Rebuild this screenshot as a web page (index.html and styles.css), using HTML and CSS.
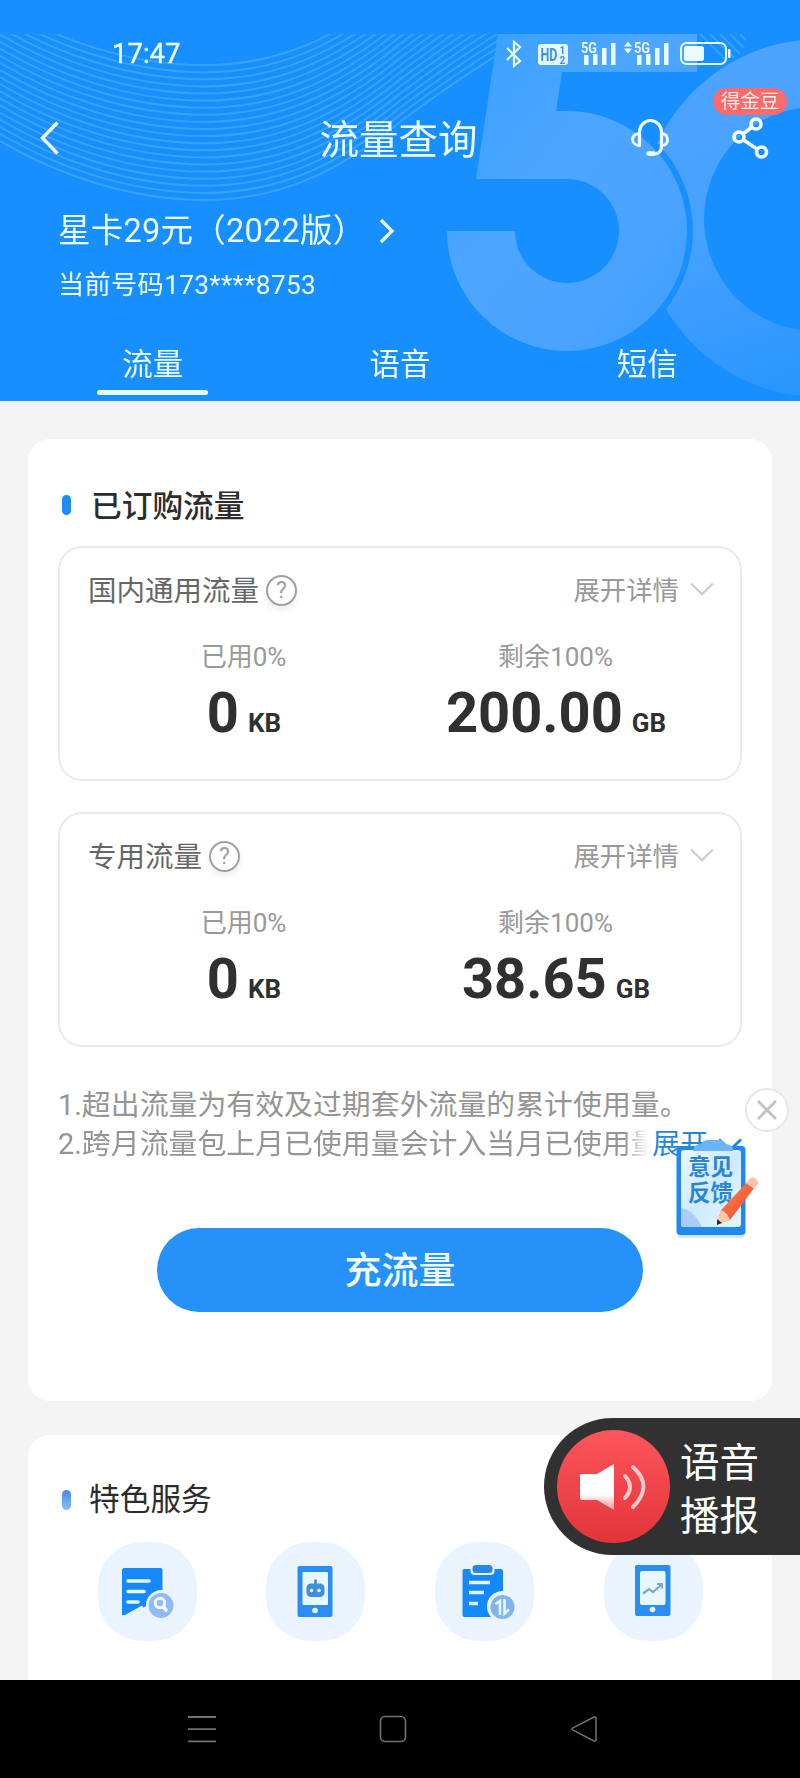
FILE: index.html
```html
<!DOCTYPE html>
<html lang="zh-CN">
<head>
<meta charset="utf-8">
<title>流量查询</title>
<link rel="stylesheet" href="styles.css">
</head>
<body>
<div class="phone">
  <header class="header">
    <svg class="header-art" viewBox="0 0 800 401" width="800" height="401" aria-hidden="true">
      <defs>
        <clipPath id="below"><rect x="0" y="34" width="800" height="367"/></clipPath>
        <mask id="ringMask">
          <rect width="800" height="401" fill="#fff"/>
          <circle cx="567" cy="231" r="126" fill="#000"/>
          <ellipse cx="815" cy="219" rx="111" ry="112" fill="#000"/>
          <rect x="476" y="30" width="221" height="42" fill="#000"/>
        </mask>
        <linearGradient id="ringFill" x1="0" y1="0" x2="0.35" y2="1">
          <stop offset="0" stop-color="#4fa5ff"/>
          <stop offset="0.55" stop-color="#46a1ff"/>
          <stop offset="1" stop-color="#2996fd"/>
        </linearGradient>
        <linearGradient id="fiveFill" x1="0" y1="0" x2="1" y2="1">
          <stop offset="0" stop-color="#35a0ff"/>
          <stop offset="0.4" stop-color="#4da6ff"/>
          <stop offset="0.75" stop-color="#49a3ff"/>
          <stop offset="1" stop-color="#379cfe"/>
        </linearGradient>
        <path id="wave" d="M-10 135 C55 175 130 200 205 200 C275 200 335 175 400 122 C440 92 500 50 560 20"/>
        <g id="wave5">
          <use href="#wave"/><use href="#wave" y="-7.1"/><use href="#wave" y="-14.2"/><use href="#wave" y="-21.3"/><use href="#wave" y="-28.4"/>
        </g>
      </defs>
      <g clip-path="url(#below)">
        <g class="waves">
          <use href="#wave5"/><use href="#wave5" y="-35.5"/><use href="#wave5" y="-71"/><use href="#wave5" y="-106.5"/>
          <path d="M700 34l26 26M710 34l24 24M720 34l20 20M730 34l14 14M740 34l6 6"/>
        </g>
        <circle cx="820" cy="218" r="179" fill="url(#ringFill)" mask="url(#ringMask)"/>
        <path fill="url(#fiveFill)" d="M498 34H697V72H562L556 111H567A120 120 0 1 1 447 231H515A52 52 0 1 0 567 179H476Z"/>
      </g>
    </svg>

    <div class="status">
      <span class="clock">17:47</span>
      <svg class="status-icons" viewBox="0 0 226 28" width="226" height="28">
        <path d="M2 8l13 13-6 5V2l6 5L2 20" fill="none" stroke="#e9fbff" stroke-width="2.2"/>
        <rect x="33" y="4" width="30" height="21" rx="3" fill="#e3f8ff"/>
        <g class="hd"><text x="35.500" y="21" font-size="18" textLength="17" lengthAdjust="spacingAndGlyphs">HD</text><text x="54.500" y="13.500" font-size="10">1</text><text x="54.500" y="23.500" font-size="10">2</text></g>
        <g fill="#e9fbff">
          <text class="net" x="76" y="12.500" font-size="15" textLength="16" lengthAdjust="spacingAndGlyphs">5G</text>
          <path d="M79 15h4.500v10H79zM88 14h4.500v11H88zM97 8h4.500v17H97zM106 3h4.500v22h-4.500z"/>
          <path d="M119 6.500l4-5 4 5zM119 8.500l4 5 4-5z"/>
          <text class="net" x="129" y="12.500" font-size="15" textLength="16" lengthAdjust="spacingAndGlyphs">5G</text>
          <path d="M132 15h4.500v10H132zM141 14h4.500v11H141zM150 8h4.500v17H150zM159 3h4.500v22h-4.500z"/>
          <rect x="179" y="6" width="20" height="15" rx="2.500"/>
          <rect x="223" y="9" width="2.500" height="9" rx="1"/>
        </g>
        <rect x="176" y="3" width="45" height="21" rx="5.500" fill="none" stroke="#e9fbff" stroke-width="2"/>
      </svg>
    </div>

    <div class="titlebar">
      <svg class="back" viewBox="0 0 20 34" width="20" height="34"><path d="M17.500 1.500L2.500 17l15 15.500" fill="none" stroke="#f3feff" stroke-width="3.400"/></svg>
      <h1 class="title">流量查询</h1>
      <div class="actions">
        <svg viewBox="0 0 40 40" width="40" height="40" fill="none" stroke="#f0fdff" stroke-width="3.200" stroke-linecap="round">
          <path d="M9.500 27V14a10.500 11 0 0 1 22 0V28c0 5.500-3 8-7.500 8h-5"/>
          <path d="M9.500 15.500c-4 .5-7 2.500-7 6s3 5.800 7 6zM31.500 15.500c4 .5 6 2.500 6 6s-2 5.800-6 6z" stroke-width="2.800"/>
          <path d="M18.500 35.500h5" stroke-width="4.500"/>
        </svg>
        <div class="share">
          <svg viewBox="0 0 38 44" width="38" height="44" fill="none" stroke="#f3feff" stroke-width="3.600">
            <circle cx="25" cy="8" r="5"/><circle cx="8" cy="21" r="5"/><circle cx="30.500" cy="36" r="5"/>
            <path d="M12 18l9-7M12.500 24l13.500 9"/>
          </svg>
          <span class="badge">得金豆</span>
        </div>
      </div>
    </div>

    <div class="plan">
      <span>星卡29元（2022版）</span>
      <svg viewBox="0 0 16 26" width="16" height="26"><path d="M2 2l11 11L2 24" fill="none" stroke="#eefcff" stroke-width="3.200"/></svg>
    </div>
    <div class="number">当前号码173****8753</div>

    <nav class="tabs">
      <span class="tab active">流量</span>
      <span class="tab">语音</span>
      <span class="tab">短信</span>
    </nav>
  </header>

  <main class="content">
    <section class="card usage">
      <h2 class="heading strong">已订购流量</h2>

      <div class="box">
        <div class="box-head">
          <span class="box-name">国内通用流量</span>
          <span class="help">?</span>
          <span class="more">展开详情</span>
          <svg viewBox="0 0 24 14" width="24" height="14"><path d="M1 1.500l11 10.500L23 1.500" fill="none" stroke="#cfcfcf" stroke-width="2.400"/></svg>
        </div>
        <div class="stats">
          <div class="stat"><span class="caption">已用0%</span><span class="value">0<small>KB</small></span></div>
          <div class="stat"><span class="caption">剩余100%</span><span class="value">200.00<small>GB</small></span></div>
        </div>
      </div>

      <div class="box">
        <div class="box-head">
          <span class="box-name">专用流量</span>
          <span class="help">?</span>
          <span class="more">展开详情</span>
          <svg viewBox="0 0 24 14" width="24" height="14"><path d="M1 1.500l11 10.500L23 1.500" fill="none" stroke="#cfcfcf" stroke-width="2.400"/></svg>
        </div>
        <div class="stats">
          <div class="stat"><span class="caption">已用0%</span><span class="value">0<small>KB</small></span></div>
          <div class="stat"><span class="caption">剩余100%</span><span class="value">38.65<small>GB</small></span></div>
        </div>
      </div>

      <div class="notes">
        <p>1.超出流量为有效及过期套外流量的累计使用量。</p>
        <p class="last"><span class="clip">2.跨月流量包上月已使用量会计入当月已使用量</span><a class="unfold">展开</a>
          <svg viewBox="0 0 24 14" width="24" height="14"><path d="M1 1.500l11 10.500L23 1.500" fill="none" stroke="#2387d3" stroke-width="2.800"/></svg></p>
      </div>

      <button class="recharge">充流量</button>
    </section>

    <section class="card services">
      <h2 class="heading light">特色服务</h2>
      <div class="service-row">
        <div class="service">
          <svg viewBox="0 0 56 56" width="56" height="56">
            <path fill="#1689fa" d="M4.500 4h37a2 2 0 0 1 2 2v38H25l-2-2.500L6 51H3V5.500z"/>
            <circle cx="42.500" cy="41.500" r="15.500" fill="#ebf4fe"/>
            <path d="M9 17h21M9 27.500h16M9 38h10" stroke="#e6f8ff" stroke-width="3.600" stroke-linecap="round"/>
            <path d="M25 43l3-1 6 8-10 3z" fill="#ebf4fe"/>
            <circle cx="42" cy="41.500" r="12.500" fill="#8fbcf2"/>
            <circle cx="41" cy="39" r="4.700" fill="none" stroke="#f2faff" stroke-width="3"/>
            <path d="M44.500 43l2.500 3" stroke="#f2faff" stroke-width="3.600" stroke-linecap="round"/>
          </svg>
        </div>
        <div class="service">
          <svg viewBox="0 0 56 56" width="56" height="56">
            <rect x="9.500" y="2" width="35" height="51" rx="2" fill="#2a8df0"/>
            <rect x="14.500" y="8" width="25.500" height="33" rx="1" fill="#e6f7ff"/>
            <circle cx="27" cy="46.500" r="2.800" fill="#e6f7ff"/>
            <path d="M27.500 15.500v5" stroke="#4b7fb5" stroke-width="2.500"/>
            <rect x="18.500" y="19.500" width="18" height="13.500" rx="4.500" fill="#3f8fe0"/>
            <circle cx="23.500" cy="26.500" r="1.800" fill="#e6f7ff"/><circle cx="31" cy="26.500" r="1.800" fill="#e6f7ff"/>
          </svg>
        </div>
        <div class="service">
          <svg viewBox="0 0 56 56" width="56" height="56">
            <rect x="5.500" y="5" width="40.500" height="48" rx="2" fill="#1689fa"/>
            <rect x="13.500" y="-1" width="24" height="12" rx="4" fill="#ebf4fe"/>
            <rect x="15.500" y="1" width="20" height="8" rx="3.500" fill="#2a86e4"/>
            <path d="M12 18.500h21M12 28.500h15M12 39.500h9" stroke="#e6f8ff" stroke-width="3.600"/>
            <circle cx="45.500" cy="42.500" r="15.500" fill="#ebf4fe"/>
            <circle cx="45.500" cy="43" r="12" fill="#7fb4ee"/>
            <path d="M38.500 40l4.500-3v14M47.500 35v14.500l4.500-4" fill="none" stroke="#e9f7ff" stroke-width="2.600"/>
          </svg>
        </div>
        <div class="service">
          <svg viewBox="0 0 56 56" width="56" height="56">
            <rect x="10" y="1" width="35.500" height="51" rx="2" fill="#2a8df0"/>
            <rect x="15" y="7" width="25.500" height="34" rx="2" fill="#e6f7ff"/>
            <circle cx="27.500" cy="45.500" r="2.800" fill="#e6f7ff"/>
            <path d="M18 29.500l6-4.500 4 3 8-7M32 20h5v4.500" fill="none" stroke="#7da9c8" stroke-width="2.200"/>
          </svg>
        </div>
      </div>
    </section>
  </main>

  <footer class="sysnav">
    <svg viewBox="0 0 28 28" width="28" height="28" stroke="#717171" stroke-width="1.800"><path d="M0 2h28M0 14.200h28M0 26.400h28"/></svg>
    <svg viewBox="0 0 28 28" width="28" height="28" fill="none" stroke="#717171" stroke-width="1.600"><rect x="1.500" y="1.500" width="25" height="25" rx="4.500"/></svg>
    <svg viewBox="0 0 28 28" width="28" height="28" fill="none" stroke="#717171" stroke-width="1.500"><path d="M24 2L3 12.800q-2 1.200 0 2.400L24 26q2 .5 2-1.500V3.500Q26 1.500 24 2z"/></svg>
  </footer>

  <aside class="feedback">
    <svg viewBox="0 0 90 104" width="90" height="104" aria-hidden="true">
      <defs>
        <linearGradient id="paper" x1="0" y1="0" x2="1" y2="1"><stop offset="0" stop-color="#e9f9ff"/><stop offset=".5" stop-color="#cfeaff"/><stop offset="1" stop-color="#e4f6ff"/></linearGradient>
        <linearGradient id="pen" x1="0" y1="0" x2="1" y2="1"><stop offset="0" stop-color="#ff9b70"/><stop offset=".5" stop-color="#f8643a"/><stop offset="1" stop-color="#e8502c"/></linearGradient>
      </defs>
      <rect x="6" y="90" width="68" height="11" rx="4" fill="#cfe8fb"/>
      <rect x="5.500" y="9" width="69" height="89" rx="4" fill="#2188ee"/>
      <rect x="10" y="13" width="60" height="77" rx="3" fill="url(#paper)"/>
      <path d="M22 14q0-6 8-7 2-4 8-4h10q5 0 7 4 8 1 7 7z" fill="#68b5f7"/>
      <path d="M10 71q13 2 21 19H13q-3 0-3-3z" fill="#a9cdf8"/>
    </svg>
    <span class="feedback-text">意见<br>反馈</span>
    <svg class="pencil" viewBox="0 0 46 52" width="46" height="52">
      <path d="M3 49l4-14L37 3q5-1 7 5L16 45z" fill="url(#pen)"/>
      <path d="M32 8l5-5q5-1 7 5l-4 6z" fill="#ffc0ac"/>
      <path d="M3 49l4-14q6 2 9 10z" fill="#ffc7a6"/>
      <path d="M3 50v-6l5 4z" fill="#252b3d"/>
    </svg>
  </aside>

  <div class="close">
    <svg viewBox="0 0 22 22" width="22" height="22"><path d="M2 2l18 18M20 2L2 20" stroke="#c2c2c2" stroke-width="2.800"/></svg>
  </div>

  <aside class="voice">
    <div class="voice-dot">
      <svg viewBox="0 0 68 48" width="68" height="48">
        <defs><linearGradient id="horn" x1="0" y1="0" x2="0" y2="1"><stop offset="0" stop-color="#fff"/><stop offset=".65" stop-color="#fff"/><stop offset="1" stop-color="#f59a9a"/></linearGradient></defs>
        <path d="M4 11h15L36 1v46L19 37H4q-2 0-2-2V13q0-2 2-2z" fill="url(#horn)"/>
        <path d="M47 13q10 11 0 22" fill="none" stroke="#ffc9c9" stroke-width="4" stroke-linecap="round"/>
        <path d="M55 4q21 19 0 40" fill="none" stroke="#ffc9c9" stroke-width="4" stroke-linecap="round"/>
      </svg>
    </div>
    <span class="voice-text">语音<br>播报</span>
  </aside>
</div>
</body>
</html>
```

FILE: styles.css
```css
* { box-sizing: border-box; }

body {
  margin: 0;
  font-family: Roboto, "Noto Sans CJK SC", sans-serif;
  background: #f4f4f4;
}

h1, h2, p { margin: 0; font-weight: 400; }
svg { display: block; flex: none; }

.phone {
  position: relative;
  width: 800px;
  height: 1778px;
  overflow: hidden;
  display: flex;
  flex-direction: column;
}

/* Header */
.header {
  position: relative;
  height: 401px;
  flex: none;
  background: #188fff;
  color: #edfcff;
  display: flex;
  flex-direction: column;
}
.header > * { position: relative; }
.header > .header-art { position: absolute; inset: 0; }
.waves { fill: none; stroke: #45a8fc; stroke-width: 2; opacity: .75; }

.status {
  margin-top: 34px;
  height: 40px;
  padding: 0 69px 0 112px;
  display: flex;
  align-items: center;
  justify-content: space-between;
}
.clock { font-size: 27.500px; line-height: 40px; font-weight: 400; -webkit-text-stroke: .4px #edfcff; }
.hd { font-family: Roboto, sans-serif; font-weight: 700; fill: #3d93e6; }
.net { font-family: Roboto, sans-serif; font-weight: 700; }

.titlebar {
  height: 128px;
  padding: 0 31px 0 40px;
  display: grid;
  grid-template-columns: 145px 1fr 145px;
  align-items: center;
}
.title { font-size: 39.500px; line-height: 56px; text-align: center; padding: 5px 12px 0 0; }
.actions { display: flex; justify-content: space-between; align-items: center; margin-left: 6px; }
.share { position: relative; }
.badge {
  position: absolute;
  top: -28px;
  right: -18px;
  width: 74px;
  height: 27px;
  border-radius: 14px;
  background: #fb6b6b;
  color: #fff0ee;
  font-size: 19.500px;
  line-height: 27px;
  text-align: center;
  white-space: nowrap;
}

.plan {
  height: 58px;
  padding-left: 58px;
  display: flex;
  align-items: center;
  font-size: 32.500px;
  letter-spacing: .25px;
  line-height: 58px;
}
.plan span { width: 321px; white-space: nowrap; }
.number { padding-left: 58px; font-size: 26.200px; letter-spacing: .35px; line-height: 50px; }

.tabs {
  margin: 25px 29px 0;
  display: grid;
  grid-template-columns: repeat(3, 1fr);
  text-align: center;
  font-size: 30.500px;
  line-height: 60px;
}
.tab { display: flex; flex-direction: column; align-items: center; }
.tab.active::after {
  content: "";
  width: 111px;
  height: 5px;
  margin-top: -5px;
  border-radius: 3px;
  background: #e8fbff;
}

/* Cards */
.content {
  flex: 1;
  min-height: 0;
  padding: 38px 28px 0;
  display: flex;
  flex-direction: column;
  gap: 34px;
  overflow: hidden;
}
.card { background: #fff; border-radius: 22px; flex: none; }
.usage { height: 962px; padding: 45px 30px 0; display: flex; flex-direction: column; }

.heading {
  display: flex;
  align-items: center;
  font-size: 30.700px;
  line-height: 46px;
  color: #2c2c2c;
}
.heading::before {
  content: "";
  width: 9px;
  height: 20px;
  margin: 0 20px 4px 4px;
  border-radius: 5px;
  background: #1f8df0;
}
.strong { font-weight: 500; }
.light::before { margin-bottom: 0; margin-right: 18px; background: linear-gradient(#3f8fe8, #8dbcf8); }

.box {
  height: 235px;
  margin-top: 31px;
  padding: 22px 26px 0 28px;
  border: 2px solid #ebebeb;
  border-radius: 24px;
}
.heading + .box { margin-top: 16px; }
.box-head { display: flex; align-items: center; height: 44px; color: #666; }
.box-name { font-size: 28.500px; line-height: 44px; }
.help {
  width: 31px;
  height: 31px;
  margin: 0 0 4px 7px;
  border: 2px solid #a0a0a0;
  border-radius: 50%;
  font-size: 23px;
  line-height: 27px;
  text-align: center;
  color: #a0a0a0;
  box-shadow: 0 4px 7px #eee;
}
.more { margin: -2px 11px 0 auto; font-size: 26.400px; line-height: 44px; color: #999; }
.box-head svg { margin-bottom: 6px; }

.stats {
  margin: 25px 0 0;
  display: grid;
  grid-template-columns: 312px 312px;
}
.stat { display: flex; flex-direction: column; align-items: center; }
.caption { font-size: 26px; line-height: 36px; color: #999; padding-right: 1px; }
.value { font-size: 56px; line-height: 66px; margin-top: 5px; font-weight: 700; color: #303030; }
.value small { font-size: 26px; margin-left: 9px; }

.notes { margin-top: 39px; color: #959595; font-size: 28.900px; line-height: 39px; }
.last { display: flex; align-items: center; white-space: nowrap; }
.clip {
  width: 596px;
  overflow: hidden;
  -webkit-mask-image: linear-gradient(90deg, #000 566px, transparent 590px);
  mask-image: linear-gradient(90deg, #000 566px, transparent 590px);
}
.unfold { color: #2387d3; width: 66px; font-size: 28px; }

.recharge {
  align-self: center;
  width: 486px;
  height: 84px;
  margin-top: 64px;
  padding: 3px 0 0;
  border: 0;
  border-radius: 42px;
  background: #2592fa;
  color: #f4fdff;
  font: 500 37px/81px Roboto, "Noto Sans CJK SC", sans-serif;
}

.services { height: 300px; padding: 42px 30px 0; }
.service-row {
  display: grid;
  grid-template-columns: repeat(4, 168.800px);
  margin: 19px 0 0 5px;
}
.service {
  width: 99px;
  height: 99px;
  margin-left: 34.500px;
  border-radius: 44px;
  background: #ebf4fe;
  display: grid;
  place-items: center;
}
.service svg { overflow: visible; }

/* System navigation */
.sysnav {
  height: 98px;
  flex: none;
  padding: 0 202px 0 188px;
  background: #000;
  display: flex;
  align-items: center;
  justify-content: space-between;
}

/* Floating controls */
.feedback { position: absolute; left: 671px; top: 1137px; width: 90px; height: 104px; }
.feedback-text {
  position: absolute;
  left: 17px;
  top: 17px;
  font-size: 22.500px;
  line-height: 26px;
  font-weight: 700;
  color: #2c86cf;
}
.pencil { position: absolute; left: 43px; top: 38px; }
.close {
  position: absolute;
  left: 745px;
  top: 1088px;
  width: 44px;
  height: 44px;
  border: 2px solid #e6e6e6;
  border-radius: 50%;
  background: #fff;
  display: grid;
  place-items: center;
}
.voice {
  position: absolute;
  left: 544px;
  top: 1418px;
  width: 256px;
  height: 137px;
  padding-left: 13px;
  border-radius: 69px 0 0 69px;
  background: #313131;
  display: flex;
  align-items: center;
  gap: 10px;
}
.voice-dot {
  width: 113px;
  height: 113px;
  padding-right: 4px;
  border-radius: 50%;
  background: linear-gradient(#fd555b, #e2353a);
  display: grid;
  place-items: center;
}
.voice-text { padding-top: 7px; font-size: 39.500px; line-height: 53.500px; color: #fff; }
```
